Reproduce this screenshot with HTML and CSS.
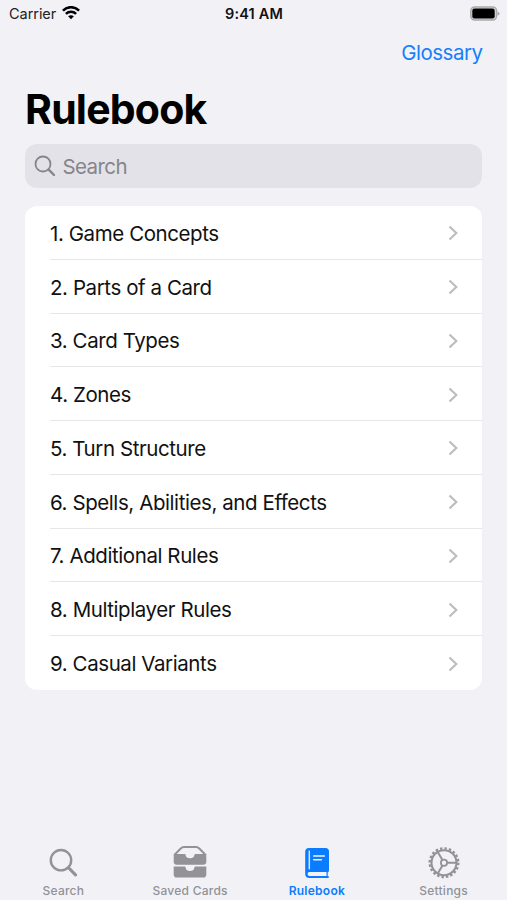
FILE: index.html
```html
<!DOCTYPE html>
<html lang="en">
<head>
<meta charset="utf-8">
<title>Rulebook</title>
<link rel="stylesheet" href="styles.css">
</head>
<body>
<div class="app">
  <header class="status">
    <div class="carrier"><span>Carrier</span>
      <svg width="18" height="14" viewBox="0 0 18 14" fill="none" stroke="#000" stroke-width="2.5"><path d="M.9 4.600C5.500 0 12.500 0 17.100 4.600M3.900 7.900C6.800 5.100 11.200 5.100 14.100 7.900"/><path d="M9 13.300L6.100 10.300Q9 8 11.900 10.300Z" fill="#000" stroke="none"/></svg>
    </div>
    <div class="time">9:41 AM</div>
    <svg class="battery" width="32" height="16" viewBox="0 0 32 16"><rect x="1.800" y=".9" width="25.800" height="13.200" rx="4" fill="#d8d8db" stroke="#aaaaac" stroke-width="1.500"/><rect x="3.300" y="2.500" width="22.400" height="10" rx="2.200" fill="#000"/><path d="M28.600 5.500Q30.600 6.300 30.600 7.600T28.600 9.700Z" fill="#aaaaac"/></svg>
  </header>
  <nav class="navbar"><a class="link">Glossary</a></nav>
  <h1 class="title">Rulebook</h1>
  <div class="search">
    <svg width="22" height="22" viewBox="0 0 22 22" fill="none" stroke="#85858b" stroke-linecap="round"><circle cx="9" cy="9" r="7.500" stroke-width="1.800"/><path d="M14.700 14.700L20 20" stroke-width="2.400"/></svg>
    <span>Search</span>
  </div>
  <ul class="list">
    <li class="row"><span>1. Game Concepts</span><svg class="chevron" viewBox="0 0 10 16"><path d="M1.500 1.500L8.300 8L1.500 14.500"/></svg></li>
    <li class="row"><span>2. Parts of a Card</span><svg class="chevron" viewBox="0 0 10 16"><path d="M1.500 1.500L8.300 8L1.500 14.500"/></svg></li>
    <li class="row"><span>3. Card Types</span><svg class="chevron" viewBox="0 0 10 16"><path d="M1.500 1.500L8.300 8L1.500 14.500"/></svg></li>
    <li class="row"><span>4. Zones</span><svg class="chevron" viewBox="0 0 10 16"><path d="M1.500 1.500L8.300 8L1.500 14.500"/></svg></li>
    <li class="row"><span>5. Turn Structure</span><svg class="chevron" viewBox="0 0 10 16"><path d="M1.500 1.500L8.300 8L1.500 14.500"/></svg></li>
    <li class="row"><span>6. Spells, Abilities, and Effects</span><svg class="chevron" viewBox="0 0 10 16"><path d="M1.500 1.500L8.300 8L1.500 14.500"/></svg></li>
    <li class="row"><span>7. Additional Rules</span><svg class="chevron" viewBox="0 0 10 16"><path d="M1.500 1.500L8.300 8L1.500 14.500"/></svg></li>
    <li class="row"><span>8. Multiplayer Rules</span><svg class="chevron" viewBox="0 0 10 16"><path d="M1.500 1.500L8.300 8L1.500 14.500"/></svg></li>
    <li class="row"><span>9. Casual Variants</span><svg class="chevron" viewBox="0 0 10 16"><path d="M1.500 1.500L8.300 8L1.500 14.500"/></svg></li>
  </ul>
  <footer class="tabs">
    <div class="tab">
      <svg width="36" height="36" viewBox="0 0 36 36" fill="none" stroke="#929297" stroke-linecap="round"><circle cx="16" cy="17.200" r="10.200" stroke-width="2.400"/><path d="M23.800 25L30.500 31.800" stroke-width="3.200"/></svg>
      <span>Search</span>
    </div>
    <div class="tab">
      <svg width="36" height="36" viewBox="0 0 36 36" fill="#929297"><path d="M1.700 11.300L8 4.700Q9.500 3 12 3H24Q26.500 3 28 4.700L34.300 11.300H31.500L26.300 6Q25.400 5.100 24 5.100H12Q10.600 5.100 9.700 6L4.500 11.300Z"/><path d="M1.700 11H12.600Q13.500 11 13.700 12.300Q14.100 15.200 18 15.200T22.300 12.300Q22.500 11 23.400 11H34.300V18.800Q34.300 21.800 31.300 21.800H4.700Q1.700 21.800 1.700 18.800Z"/><path d="M1.700 23.600H12.600Q13.500 23.600 13.700 24.900Q14.100 27.900 18 27.900T22.300 24.900Q22.500 23.600 23.400 23.600H34.300V31.500Q34.300 34.600 31.300 34.600H4.700Q1.700 34.600 1.700 31.500Z"/></svg>
      <span>Saved Cards</span>
    </div>
    <div class="tab active">
      <svg width="36" height="36" viewBox="0 -.7 36 36"><path d="M10 4.300H26.500Q30 4.300 30 7.800V26.500Q30 28.300 28.700 28.800V32.200H29Q29.900 32.200 29.900 33.200T29 34.300H10.500Q6.200 34.300 6.200 30V8.300Q6.200 4.300 10 4.300Z" fill="#0a7cff"/><path d="M10.500 28.300H27.500V32.200H10.500Q8.600 32.200 8.600 30.200T10.500 28.300Z" fill="#f2f2f7"/><path d="M10.300 6.900V25.600" stroke="#d9e6fb" stroke-width="1.500"/><path d="M14.700 12.300H25.400M14.700 16.100H22.400" stroke="#f2f2f7" stroke-width="1.500" stroke-linecap="round"/></svg>
      <span>Rulebook</span>
    </div>
    <div class="tab">
      <svg width="36" height="36" viewBox="0 -1.200 36 36" fill="none" stroke="#929297"><circle cx="18" cy="18.500" r="14.300" stroke-width="2.400" stroke-dasharray="2.450 2.042"/><circle cx="18" cy="18.500" r="12.500" stroke-width="2.100"/><circle cx="18" cy="18.500" r="3.100" stroke-width="1.800"/><path d="M21.100 18.500H30.200M16.450 15.820L11.900 7.940M16.450 21.180L11.900 29.060" stroke-width="2"/></svg>
      <span>Settings</span>
    </div>
  </footer>
</div>
</body>
</html>
```
FILE: styles.css
```css
* { box-sizing: border-box; }
body {
  margin: 0;
  background: #f1f1f6;
  font-family: Inter, "Liberation Sans", sans-serif;
  color: #000;
}
.app { height: 900px; display: flex; flex-direction: column; overflow: hidden; }
svg { display: block; flex: none; }
.status {
  height: 27px;
  flex: none;
  display: grid;
  grid-template-columns: 1fr auto 1fr;
  padding: 0 6px 0 9px;
  align-items: center;
  font-size: 14.500px;
}
.carrier { display: flex; align-items: center; gap: 6px; color: #222; letter-spacing: -.05px; }
.carrier svg { margin: -1px 0 0 0; }
.time { font-weight: 600; color: #111; letter-spacing: .15px; margin-right: 2px; }
.battery { justify-self: end; }
.navbar {
  height: 53px;
  flex: none;
  display: flex;
  align-items: center;
  justify-content: flex-end;
  padding: 0 25px 3px 0;
}
.link { color: #1580fb; font-size: 20.500px; letter-spacing: -.5px; margin-right: -.5px; }
.title {
  margin: 0 25px;
  height: 64px;
  flex: none;
  line-height: 58px;
  font-size: 41px;
  font-weight: 700;
  letter-spacing: -.8px;
}
.search {
  margin: 0 25px;
  height: 44px;
  flex: none;
  border-radius: 12px;
  background: #e3e2e8;
  color: #85858b;
  display: flex;
  align-items: center;
  gap: 6.500px;
  padding-left: 9px;
  font-size: 20.500px;
  letter-spacing: -.6px;
}
.list {
  list-style: none;
  margin: 18px 25px 0;
  padding: 0 0 0 25px;
  background: #fff;
  border-radius: 12px;
  flex: none;
}
.row {
  height: 53.780px;
  display: flex;
  align-items: center;
  justify-content: space-between;
  padding: 2px 24px 0 0;
  border-bottom: 1px solid #e7e7ea;
  font-size: 20.500px;
  letter-spacing: -.42px;
  color: #111;
  white-space: nowrap;
}
.row:last-child { border-bottom: 0; padding-top: 1px; }
.chevron { width: 10px; height: 16px; fill: none; stroke: #bdbdc1; stroke-width: 2.200; }
.tabs {
  margin-top: auto;
  height: 57px;
  display: grid;
  grid-template-columns: repeat(4, 1fr);
  flex: none;
}
.tab {
  display: flex;
  flex-direction: column;
  align-items: center;
  gap: 4px;
  color: #929297;
  font-size: 12px;
  line-height: 16px;
  font-weight: 500;
  letter-spacing: .25px;
}
.active { color: #0a7cff; font-weight: 600; }
```
